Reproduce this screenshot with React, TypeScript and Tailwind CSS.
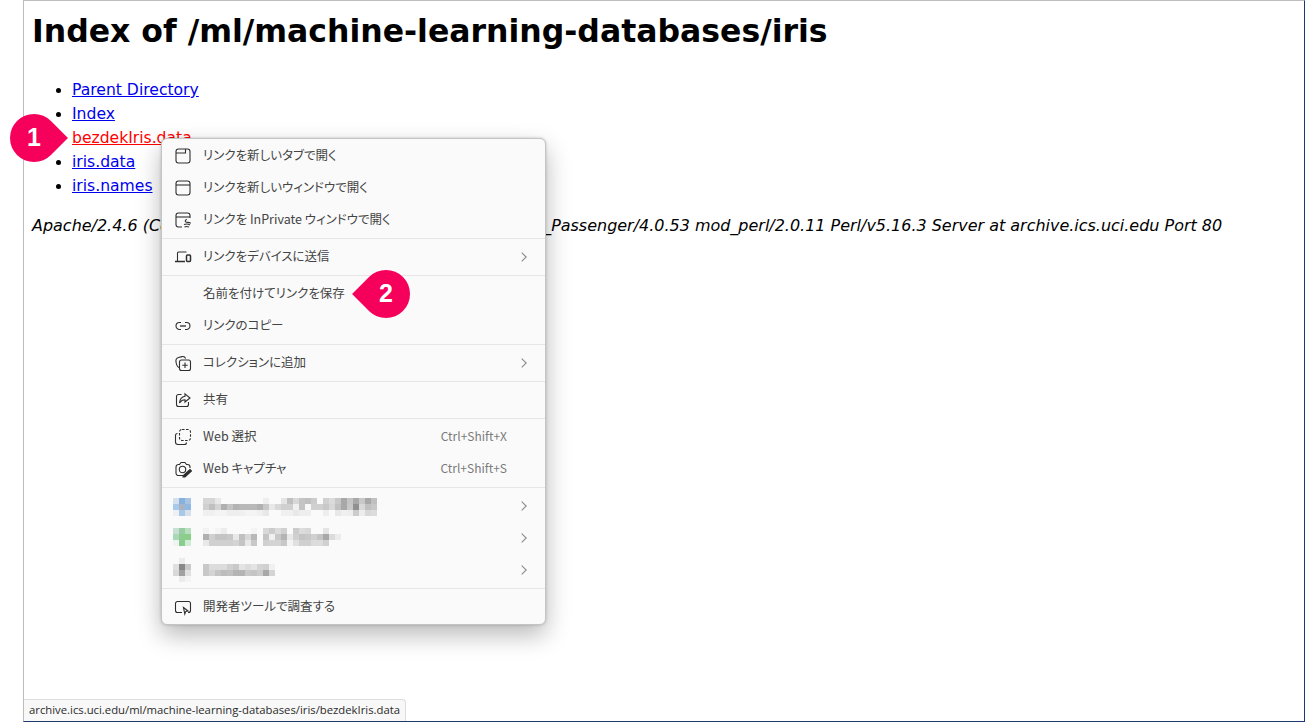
import type { ReactNode } from "react";

const ink = "#2e2e2e";

const Icon = ({ children }: { children: ReactNode }) => (
  <svg
    width="18"
    height="18"
    viewBox="0 0 18 18"
    fill="none"
    stroke={ink}
    strokeWidth="1.1"
    className="shrink-0"
  >
    {children}
  </svg>
);

const icons = {
  tab: (
    <Icon>
      <rect x="2" y="2" width="14" height="14" rx="2.5" />
      <path d="M2 6H11.5V2" />
    </Icon>
  ),
  window: (
    <Icon>
      <rect x="2" y="2" width="14" height="14" rx="2.5" />
      <path d="M2 6H16" />
    </Icon>
  ),
  inprivate: (
    <Icon>
      <path d="M8 16H4.5A2.5 2.5 0 0 1 2 13.5V4.5A2.5 2.5 0 0 1 4.5 2H13.5A2.5 2.5 0 0 1 16 4.5V7" />
      <path d="M2 6H16" />
      <path d="M13 8.5C11 8.5 10.5 11 12.5 11.3C14.5 11.5 16.5 11 16.5 12.5M10 13.5C12 12.8 14.5 13 16 14M10.5 16C12 15.2 13.5 15.5 15 16" />
    </Icon>
  ),
  devices: (
    <Icon>
      <path d="M3.5 13V5A1 1 0 0 1 4.5 4H12.5" />
      <path d="M1 13.5H11" strokeWidth="1.5" />
      <rect x="12.5" y="7" width="4" height="6.5" rx="1" strokeWidth="1.5" />
    </Icon>
  ),
  link: (
    <Icon>
      <path d="M7 5.5H5.5A3.5 3.5 0 0 0 5.5 12.5H7M11 5.5H12.5A3.5 3.5 0 0 1 12.5 12.5H11" />
      <path d="M6 9H12" strokeWidth="1.3" />
    </Icon>
  ),
  collection: (
    <Icon>
      <path d="M5 13.5C3.5 13 2.5 11 2 8C1.6 5.5 2.5 4 4.5 3.5L8 2.6C9.8 2.2 11 2.8 11.6 4.5" />
      <rect x="5.5" y="6" width="11" height="10.5" rx="2" />
      <path d="M11 8.5V14M8.3 11.2H13.7" />
    </Icon>
  ),
  share: (
    <Icon>
      <path d="M7.5 3.5H4.5A2 2 0 0 0 2.5 5.5V13.5A2 2 0 0 0 4.5 15.5H12.5A2 2 0 0 0 14.5 13.5V11" />
      <path d="M11 2.8L16 7L11 11V8.8C8.5 8.8 6.8 10 5.5 12C5.8 8.5 8 5.8 11 5.3Z" />
    </Icon>
  ),
  select: (
    <Icon>
      <path d="M3.5 5.5A2 2 0 0 0 1.5 7.5V14A2.5 2.5 0 0 0 4 16.5H10.5A2 2 0 0 0 12.5 14.5" />
      <rect x="5.5" y="1.5" width="11" height="11" rx="2.5" strokeDasharray="2.6 1.4" />
    </Icon>
  ),
  capture: (
    <Icon>
      <path d="M9 15.5H4.5A2.5 2.5 0 0 1 2 13V7A2.5 2.5 0 0 1 4.5 4.5H5.5L7 2.5H11L12.5 4.5H13.5A2.5 2.5 0 0 1 16 7V8" />
      <circle cx="8.5" cy="9.5" r="3.2" />
      <path d="M9.5 15.5L16 9.5L17.5 11L11 17L9 17Z" fill={ink} />
    </Icon>
  ),
  devtools: (
    <Icon>
      <path d="M8 14.5H3.5A2 2 0 0 1 1.5 12.5V5.5A2 2 0 0 1 3.5 3.5H14.5A2 2 0 0 1 16.5 5.5V12.5A2 2 0 0 1 14.5 14.5H14" />
      <path d="M9.5 9.5L14 13L11.8 13.4L10.8 16Z" />
    </Icon>
  ),
};

const Chevron = () => (
  <svg width="6" height="10" viewBox="0 0 6 10" fill="none" stroke="#8a8a8a" strokeWidth="1.1" className="shrink-0">
    <path d="M0.7 0.7L5.2 5L0.7 9.3" />
  </svg>
);

const Row = ({
  icon,
  label,
  shortcut,
  arrow,
}: {
  icon?: ReactNode;
  label: string;
  shortcut?: string;
  arrow?: boolean;
}) => (
  <div className="flex h-8 items-center pl-[12px] pr-[18px]">
    <div className="w-[18px] shrink-0">{icon}</div>
    <span className="ml-[11px] -translate-y-px whitespace-nowrap text-[12.5px] text-[#444444] [font-feature-settings:'palt']">
      {label}
    </span>
    {shortcut && (
      <span className="ml-auto mr-[20px] -translate-y-px text-[12px] text-[#7a7a7a]">{shortcut}</span>
    )}
    {arrow && (
      <span className="ml-auto">
        <Chevron />
      </span>
    )}
  </div>
);

const Sep = () => (
  <div className="flex h-[5px] items-center">
    <div className="h-px w-full bg-[#e6e6e6]" />
  </div>
);

// pixelated (blurred out) extension names, one colour per 6px cell
const Mosaic = ({ icon, iconY, textY, text }: { icon: string[][]; iconY: number; textY: number; text: string[][] }) => (
  <svg width="216" height="32" className="shrink-0">
    {icon.map((r, y) =>
      r.map((c, x) => <rect key={`i${x}-${y}`} x={x * 6} y={iconY + y * 6} width="6" height="6" fill={`#${c}`} />),
    )}
    {text.map((r, y) =>
      r.map((c, x) => <rect key={`t${x}-${y}`} x={30 + x * 6} y={textY + y * 6} width="6" height="6" fill={`#${c}`} />),
    )}
  </svg>
);

const blurRow = (s: string) => s.split(" ");

const BlurItem = (props: { icon: string[][]; iconY: number; textY: number; text: string[][] }) => (
  <div className="flex h-8 items-center pl-[11px] pr-[18px]">
    <Mosaic {...props} />
    <span className="ml-auto">
      <Chevron />
    </span>
  </div>
);

const Callout = ({ n, side, className }: { n: number; side: "left" | "right"; className: string }) => (
  <div className={`absolute flex h-12 w-12 items-center justify-center ${className}`}>
    <div
      className={
        side === "right"
          ? "absolute inset-0 rotate-45 rounded-full rounded-tr-none bg-[#f5005a]"
          : "absolute inset-0 rotate-45 rounded-full rounded-bl-none bg-[#f5005a]"
      }
    />
    <span className="relative font-['Liberation_Sans',sans-serif] text-[25px] font-bold text-white">{n}</span>
  </div>
);

export default function App() {
  return (
    <div className="relative h-[722px] w-[1305px] overflow-hidden bg-white pl-[23px] font-['DejaVu_Sans',sans-serif] text-black">
      <div className="h-full border-b border-l border-r border-t border-b-[#1d3a6e] border-l-[#bdbdbd] border-r-[#1d3a6e] border-t-[#bdbdbd] pl-2 pt-[11px]">
        <h1 className="text-[31.5px] font-bold leading-[38px]">Index of /ml/machine-learning-databases/iris</h1>
        <ul className="mt-[28px] list-disc pl-10 text-[15.6px] leading-6">
          <li>
            <a className="text-[#0000ee] underline">Parent Directory</a>
          </li>
          <li>
            <a className="text-[#0000ee] underline">Index</a>
          </li>
          <li>
            <a className="text-[#ff0000] underline">bezdekIris.data</a>
          </li>
          <li>
            <a className="text-[#0000ee] underline">iris.data</a>
          </li>
          <li>
            <a className="text-[#0000ee] underline">iris.names</a>
          </li>
        </ul>
        <address className="mt-4 whitespace-nowrap text-[15.97px] italic leading-6">
          Apache/2.4.6 (CentOS) OpenSSL/1.0.2k-fips SVN/1.7.14 Phusion_Passenger/4.0.53 mod_perl/2.0.11 Perl/v5.16.3
          Server at archive.ics.uci.edu Port 80
        </address>
      </div>

      <div className="absolute bottom-px left-6 flex h-[22px] w-[382px] items-center rounded-tr-[4px] border-r border-t border-[#dcdcdc] bg-[#f8f8f8] pl-[5px] font-['Open_Sans',sans-serif] text-[11.3px] text-[#2a2a2a]">
        archive.ics.uci.edu/ml/machine-learning-databases/iris/bezdekIris.data
      </div>

      <div className="absolute left-[161px] top-[138px] w-[385px] rounded-[6px] border border-[#c4c4c4] bg-[#fafafa] py-px font-['Noto_Sans_CJK_JP',sans-serif] shadow-[0_0_3px_rgba(0,0,0,0.2),0_10px_24px_rgba(0,0,0,0.28)]">
        <Row icon={icons.tab} label="リンクを新しいタブで開く" />
        <Row icon={icons.window} label="リンクを新しいウィンドウで開く" />
        <Row icon={icons.inprivate} label="リンクを InPrivate ウィンドウで開く" />
        <Sep />
        <Row icon={icons.devices} label="リンクをデバイスに送信" arrow />
        <Sep />
        <Row label="名前を付けてリンクを保存" />
        <Row icon={icons.link} label="リンクのコピー" />
        <Sep />
        <Row icon={icons.collection} label="コレクションに追加" arrow />
        <Sep />
        <Row icon={icons.share} label="共有" />
        <Sep />
        <Row icon={icons.select} label="Web 選択" shortcut="Ctrl+Shift+X" />
        <Row icon={icons.capture} label="Web キャプチャ" shortcut="Ctrl+Shift+S" />
        <Sep />
        <BlurItem
          iconY={8}
          textY={8}
          icon={[blurRow("d4e0ec 88b0dc a8c4e0"), blurRow("a8c8ec a8b4c4 90b8e4"), blurRow("ecf0f4 a8c8e8 d8e0ec")]}
          text={[
            blurRow("d6d6d6 d6d6d6 e8e8e8 fafafa fafafa fafafa fafafa fafafa fafafa fafafa eeeeee fafafa fafafa e4e4e4 c0c0c0 d8d8d8 c4c4c4 c0c0c0 cccccc fafafa d0d0d0 dcdcdc c8c8c8 a8a8a8 c4c4c4 a8a8a8 c8c8c8 a8a8a8 c0c0c0"),
            blurRow("d0d0d0 c0c0c0 d4d4d4 b0b0b0 c4c4c4 b4b4b4 b8b8b8 b8b8b8 b8b8b8 b0b0b0 c8c8c8 e8e8e8 d8d8d8 d0d0d0 d0d0d0 f0f0f0 c4c4c4 f8f8f8 d0d0d0 d0d0d0 c8c8c8 d8d8d8 c0c0c0 a8a8a8 c8c8c8 909090 d8d8d8 c0c0c0 c8c8c8"),
            blurRow("f0f0f0 f0f0f0 f4f4f4 f4f4f4 eeeeee eeeeee f0f0f0 f4f4f4 f4f4f4 f0f0f0 e8e8e8 fafafa fafafa f0f0f0 f0f0f0 e8e8e8 eeeeee eeeeee fafafa fafafa eeeeee fafafa e8e8e8 f0f0f0 eeeeee cccccc ececec d8d8d8 dcdcdc"),
          ]}
        />
        <BlurItem
          iconY={6}
          textY={6}
          icon={[blurRow("c8e0d4 98cca4 b8e0c0"), blurRow("a8d8b8 90cc90 88d088"), blurRow("f0f4f0 88cc90 d0ecd4")]}
          text={[
            blurRow("f2f2f2 fafafa f4f4f4 ececec fafafa fafafa fafafa fafafa f4f4f4 fafafa d8d8d8 cccccc dcdcdc d0d0d0 fafafa cccccc dcdcdc d8d8d8 fafafa fafafa e4e4e4"),
            blurRow("b0b0b0 d0d0d0 c4c4c4 c4c4c4 c8c8c8 e8e8e8 c0c0c0 d8d8d8 b8b8b8 fafafa c4c4c4 f0f0f0 c8c8c8 b4b4b4 e8e8e8 d0d0d0 c4c4c4 c8c8c8 d0d0d0 c4c4c4 a8a8a8 dcdcdc ececec"),
            blurRow("e8e8e8 d0d0d0 d0d0d0 d0d0d0 d0d0d0 d4d4d4 c4c4c4 e8e8e8 c8c8c8 fafafa d0d0d0 d4d4d4 d4d4d4 c8c8c8 f4f4f4 e0e0e0 d0d0d0 d0d0d0 dcdcdc dcdcdc d0d0d0"),
          ]}
        />
        <BlurItem
          iconY={4}
          textY={10}
          icon={[
            blurRow("fafafa ececec fafafa"),
            blurRow("e0e0e0 888888 c8c8c8"),
            blurRow("d8d8d8 a0a0a0 e0e0e0"),
            blurRow("fafafa ececec f4f4f4"),
          ]}
          text={[
            blurRow("c8c8c8 dcdcdc dcdcdc dcdcdc d0d0d0 c8c8c8 e4e4e4 dcdcdc e4e4e4 d4d4d4 d0d0d0 f0f0f0"),
            blurRow("c8c8c8 d4d4d4 c4c4c4 bcbcbc c0c0c0 b4b4b4 b4b4b4 c8c8c8 c4c4c4 cccccc a8a8a8 d4d4d4"),
          ]}
        />
        <Sep />
        <Row icon={icons.devtools} label="開発者ツールで調査する" />
      </div>

      <Callout n={1} side="right" className="left-[10px] top-[114px]" />
      <Callout n={2} side="left" className="left-[362px] top-[270px]" />
    </div>
  );
}
